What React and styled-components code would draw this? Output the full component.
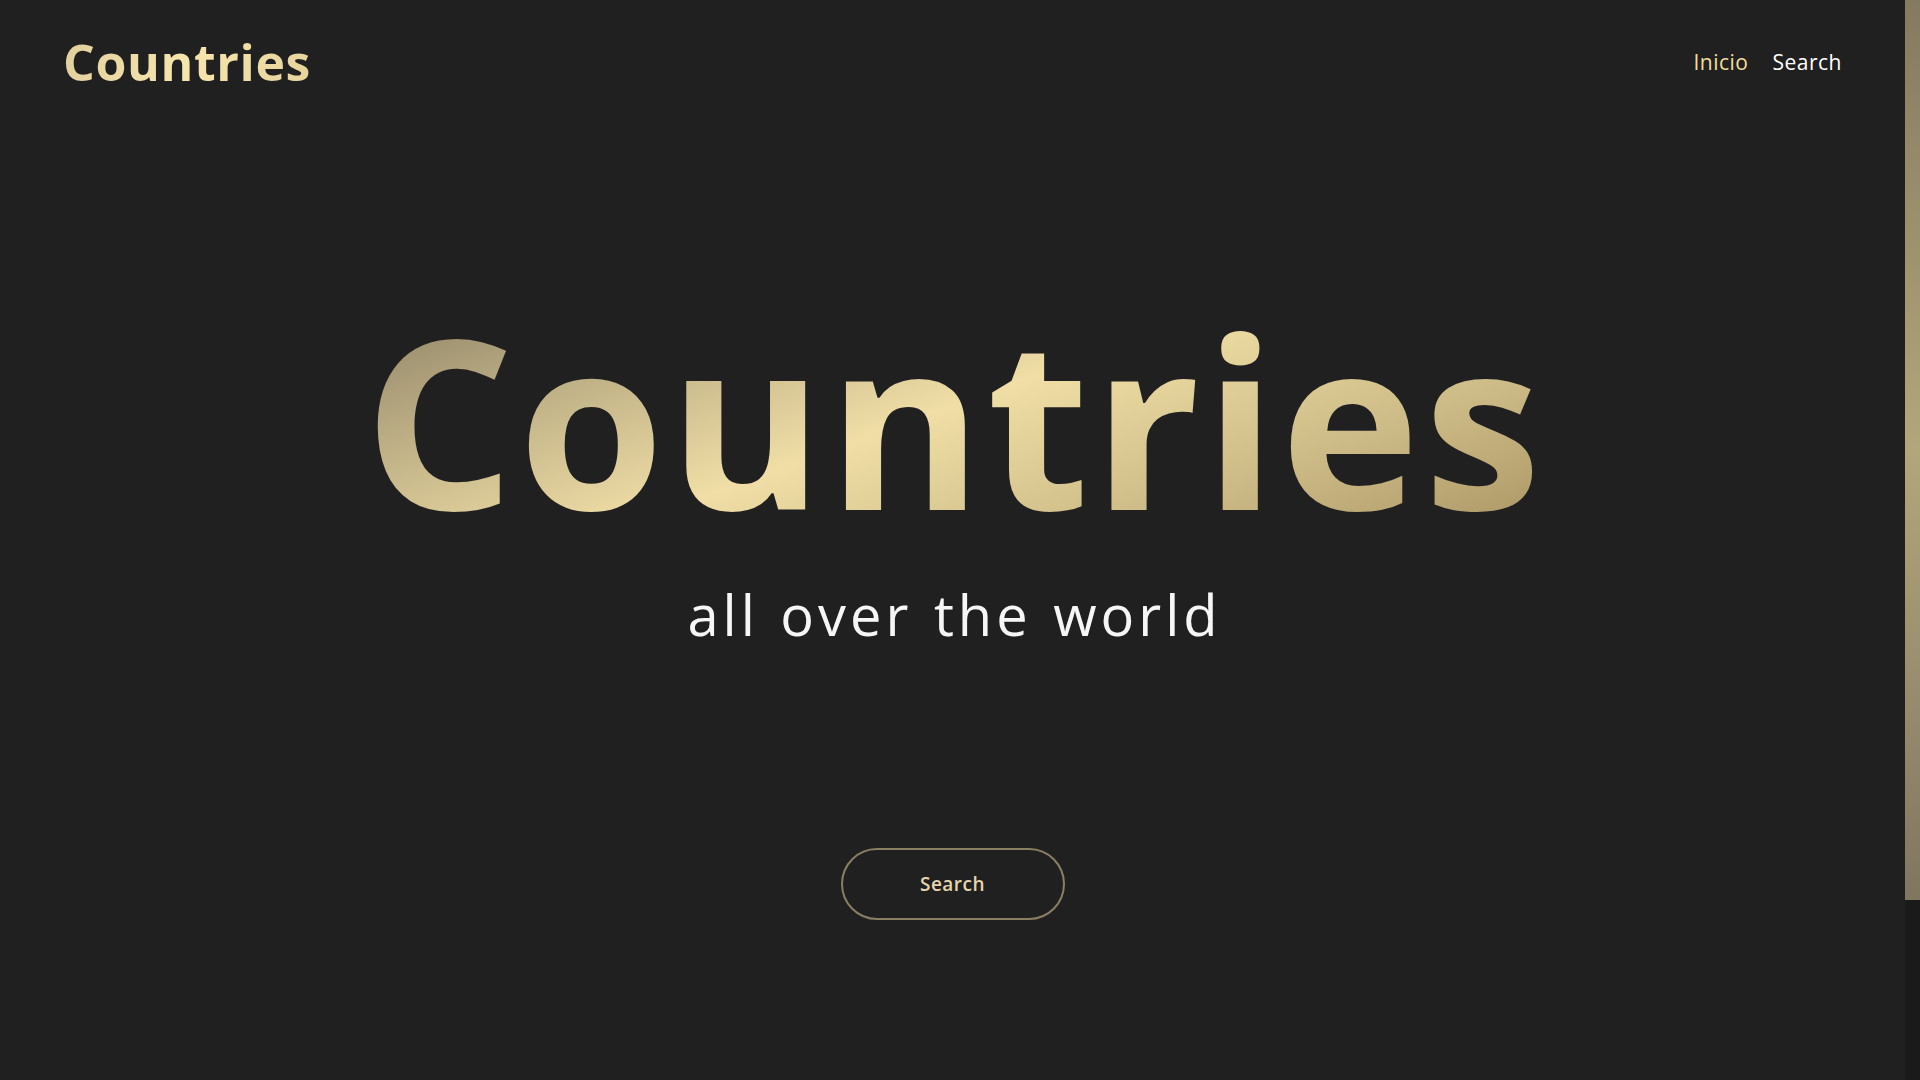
import React from 'react';
import styled, { createGlobalStyle } from 'styled-components';

const GlobalStyle = createGlobalStyle`
	html, body {
		margin: 0;
		padding: 0;
		background-color: #202020;
		overflow: hidden;
	}
	body {
		font-family: 'Open Sans', 'Noto Sans', sans-serif;
	}
`;

const Page = styled.div`
	display: flex;
	height: 100vh;
	background-color: #202020;
`;

const Content = styled.div`
	flex: 1;
	min-width: 0;
`;

const ScrollTrack = styled.div`
	width: 15px;
	background-color: #1a1a1a;
`;

const ScrollThumb = styled.div`
	height: 900px;
	background: linear-gradient(180deg, #847a5e 0%, #b4a67b 50%, #7f7660 100%);
`;

const Header = styled.header`
	display: flex;
	align-items: center;
	justify-content: space-between;
	height: 124px;
	padding: 0 63px;
`;

const Logo = styled.h1`
	margin: 0;
	font-size: 50px;
	font-weight: 700;
	letter-spacing: 0.6px;
	background: linear-gradient(110deg, #e0cf9c 0%, #f6e5ad 50%, #e6d39b 100%);
	-webkit-background-clip: text;
	background-clip: text;
	color: transparent;
`;

const Nav = styled.nav`
	display: flex;
	gap: 24px;
`;

const NavLink = styled.a`
	font-size: 21px;
	letter-spacing: 0.5px;
	color: ${props => (props.active ? '#f3dd9c' : '#ffffff')};
	text-decoration: none;
	cursor: pointer;
`;

const Hero = styled.main`
	display: flex;
	flex-direction: column;
	align-items: center;
	padding-top: 177px;
`;

const Title = styled.h2`
	margin: 0;
	padding-left: 4px;
	font-size: 236px;
	font-weight: 700;
	line-height: 1;
	letter-spacing: 4px;
	background: linear-gradient(160deg, #8c8064 0%, #c8b98c 28%, #f0dea6 48%, #cdbb87 75%, #a89462 100%);
	-webkit-background-clip: text;
	background-clip: text;
	color: transparent;
`;

const Subtitle = styled.p`
	margin: 44px 0 0;
	padding-left: 4px;
	font-size: 56px;
	font-weight: 400;
	line-height: 1.2;
	letter-spacing: 4px;
	word-spacing: 3px;
	color: #f6f6f6;
`;

const SearchButton = styled.button`
	margin-top: 200px;
	width: 224px;
	height: 72px;
	border: 2px solid #8a7f62;
	border-radius: 36px;
	background: transparent;
	color: #e4d5aa;
	font-family: inherit;
	font-size: 19px;
	font-weight: 600;
	letter-spacing: 0.5px;
	cursor: pointer;
`;

export default function App() {
	return (
		<Page>
			<GlobalStyle />
			<Content>
				<Header>
					<Logo>Countries</Logo>
					<Nav>
						<NavLink active>Inicio</NavLink>
						<NavLink>Search</NavLink>
					</Nav>
				</Header>
				<Hero>
					<Title>Countries</Title>
					<Subtitle>all over the world</Subtitle>
					<SearchButton>Search</SearchButton>
				</Hero>
			</Content>
			<ScrollTrack>
				<ScrollThumb />
			</ScrollTrack>
		</Page>
	);
}
